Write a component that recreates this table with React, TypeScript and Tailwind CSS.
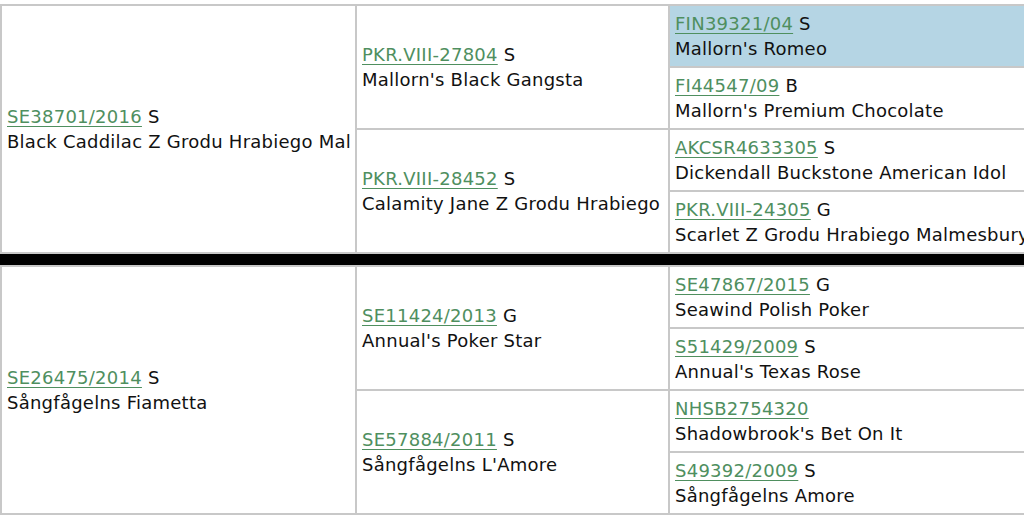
const SIDES = [
  {
    parent: { reg: "SE38701/2016", sex: "S", name: "Black Caddilac Z Grodu Hrabiego Mal" },
    grand: [
      {
        dog: { reg: "PKR.VIII-27804", sex: "S", name: "Mallorn's Black Gangsta" },
        great: [
          { reg: "FIN39321/04", sex: "S", name: "Mallorn's Romeo", hl: true },
          { reg: "FI44547/09", sex: "B", name: "Mallorn's Premium Chocolate" },
        ],
      },
      {
        dog: { reg: "PKR.VIII-28452", sex: "S", name: "Calamity Jane Z Grodu Hrabiego" },
        great: [
          { reg: "AKCSR4633305", sex: "S", name: "Dickendall Buckstone American Idol" },
          { reg: "PKR.VIII-24305", sex: "G", name: "Scarlet Z Grodu Hrabiego Malmesbury" },
        ],
      },
    ],
  },
  {
    parent: { reg: "SE26475/2014", sex: "S", name: "Sångfågelns Fiametta" },
    grand: [
      {
        dog: { reg: "SE11424/2013", sex: "G", name: "Annual's Poker Star" },
        great: [
          { reg: "SE47867/2015", sex: "G", name: "Seawind Polish Poker" },
          { reg: "S51429/2009", sex: "S", name: "Annual's Texas Rose" },
        ],
      },
      {
        dog: { reg: "SE57884/2011", sex: "S", name: "Sångfågelns L'Amore" },
        great: [
          { reg: "NHSB2754320", sex: "", name: "Shadowbrook's Bet On It" },
          { reg: "S49392/2009", sex: "S", name: "Sångfågelns Amore" },
        ],
      },
    ],
  },
];

type Dog = { reg: string; sex: string; name: string; hl?: boolean };

function Cell({ dog, className = "" }: { dog: Dog; className?: string }) {
  return (
    <div
      className={`flex flex-col justify-center overflow-hidden whitespace-nowrap px-[5px] leading-[25px] ${
        dog.hl ? "bg-[#b5d5e4]" : "bg-white"
      } ${className}`}
    >
      <div>
        <a href="#" className="text-[#4f8f5f] underline decoration-1 underline-offset-[3px]">
          {dog.reg}
        </a>
        {dog.sex && <span> {dog.sex}</span>}
      </div>
      <div>{dog.name}</div>
    </div>
  );
}

export default function App() {
  return (
    <div
      className="h-[515px] w-[1024px] overflow-hidden bg-white pt-[4px] text-[18px] tracking-[0.25px] text-[#111]"
      style={{ fontFamily: '"DejaVu Sans", Verdana, sans-serif' }}
    >
      {SIDES.map((side, i) => (
        <div key={i}>
          {i > 0 && <div className="h-[11px] bg-black" />}
          <div className="flex w-[1040px] gap-[2px] border-2 border-[#c8c8c8] bg-[#c8c8c8]">
            <Cell dog={side.parent} className="w-[353px] shrink-0" />
            <div className="flex w-[311px] shrink-0 flex-col gap-[2px]">
              {side.grand.map((g, j) => (
                <Cell key={j} dog={g.dog} className="h-[122px]" />
              ))}
            </div>
            <div className="flex flex-1 flex-col gap-[2px]">
              {side.grand.flatMap((g) => g.great).map((d, k) => (
                <Cell key={k} dog={d} className="h-[60px]" />
              ))}
            </div>
          </div>
        </div>
      ))}
    </div>
  );
}
